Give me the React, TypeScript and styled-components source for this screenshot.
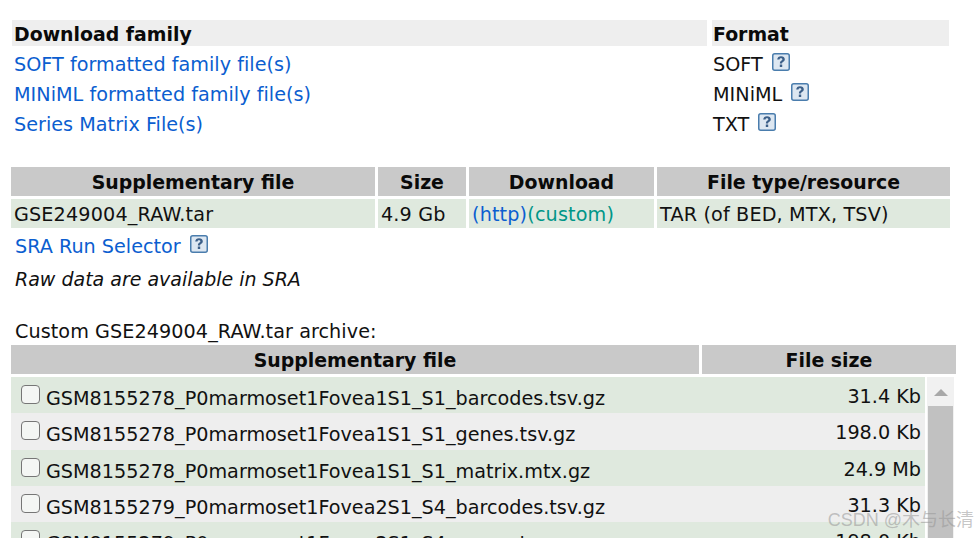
import * as React from 'react'
import styled, { createGlobalStyle } from 'styled-components'

const GlobalStyle = createGlobalStyle`
  html, body {
    margin: 0;
    padding: 0;
    height: 538px;
    overflow: hidden;
    background: #fff;
  }
  body {
    font-family: 'DejaVu Sans', Verdana, sans-serif;
    font-size: 19.2px;
    color: #111;
  }
`

const Page = styled.div`
  width: 978px;
  height: 538px;
  padding: 20px 0 0 11px;
  box-sizing: border-box;
  position: relative;
  overflow: hidden;
`

const FamilyTable = styled.div`
  display: grid;
  grid-template-columns: 695px 237px;
  column-gap: 5px;
  margin-left: 1px;
  width: 937px;
`

const FamilyHead = styled.div<{ $narrow?: boolean }>`
  height: 26px;
  line-height: 28px;
  padding-left: ${(p) => (p.$narrow ? '1px' : '2px')};
  background: #eee;
  font-size: 18.9px;
  font-weight: 700;
  color: #0a0a0a;
`

const FamilyCell = styled.div<{ $narrow?: boolean }>`
  height: 30px;
  line-height: 38px;
  padding-left: ${(p) => (p.$narrow ? '1px' : '2px')};
  white-space: nowrap;
  letter-spacing: 0.02px;
`

const Link = styled.a<{ $teal?: boolean }>`
  color: ${(p) => (p.$teal ? '#009688' : '#0b5ed0')};
  text-decoration: none;
`

const HelpSvg = styled.svg`
  display: inline-block;
  width: 18px;
  height: 18px;
  margin-left: 9px;
  vertical-align: 0;
`

const ResourceTable = styled.div`
  display: grid;
  grid-template-columns: 364px 88px 185px 293px;
  column-gap: 3px;
  row-gap: 3px;
  margin-top: 31px;
  width: 939px;
`

const HeadCell = styled.div`
  height: 29px;
  line-height: 31px;
  background: #c9c9c9;
  font-size: 18.9px;
  font-weight: 700;
  text-align: center;
  color: #0a0a0a;
`

const DataCell = styled.div`
  height: 29px;
  line-height: 31px;
  padding-left: 3px;
  background: #dfe9de;
  white-space: nowrap;
  letter-spacing: 0.15px;
`

const SraRow = styled.div`
  height: 34px;
  line-height: 37px;
  padding-left: 4px;
`

const Note = styled.div`
  height: 33px;
  line-height: 35px;
  padding-left: 4px;
  font-size: 19px;
  font-style: italic;
`

const ArchiveTitle = styled.div`
  margin-top: 25px;
  height: 25px;
  line-height: 23px;
  padding-left: 4px;
  letter-spacing: 0.07px;
`

const ArchiveHead = styled.div`
  display: grid;
  grid-template-columns: 688px 254px;
  column-gap: 3px;
  width: 945px;
`

const FileArea = styled.div`
  display: flex;
  margin-top: 3px;
  height: 200px;
  overflow: hidden;
`

const FileList = styled.div`
  width: 914px;
  flex: none;
`

const FileRow = styled.div<{ $shaded: boolean }>`
  display: flex;
  height: 36.33px;
  background: ${(p) => (p.$shaded ? '#dfe9de' : '#eee')};
  white-space: nowrap;
`

const Check = styled.span`
  flex: none;
  box-sizing: border-box;
  width: 19px;
  height: 19px;
  margin: 8px 6px 0 10px;
  border: 1.5px solid #767676;
  border-radius: 4px;
  background: #f4f6f4;
`

const FileName = styled.span`
  flex: 1;
  line-height: 44px;
`

const FileSize = styled.span`
  padding-right: 4px;
  line-height: 40px;
`

const Scrollbar = styled.div`
  width: 27px;
  margin-left: 2px;
  background: #f1f1f1;
  display: flex;
  flex-direction: column;
  flex: none;
`

const ScrollUp = styled.div`
  height: 29px;
  display: flex;
  justify-content: center;
  padding-top: 12px;
  box-sizing: border-box;
  &::before {
    content: '';
    border-left: 7px solid transparent;
    border-right: 7px solid transparent;
    border-bottom: 7px solid #a8a8a8;
    height: 0;
  }
`

const ScrollThumb = styled.div`
  flex: 1;
  margin: 0 1px;
  background: #c1c1c1;
`

const Watermark = styled.div`
  position: absolute;
  right: 4px;
  top: 510px;
  font-family: 'Liberation Sans', 'Noto Sans CJK SC', sans-serif;
  font-size: 18px;
  line-height: 20px;
  color: rgba(150, 150, 150, 0.55);
  white-space: nowrap;
`

function HelpIcon() {
  return (
    <HelpSvg viewBox="0 0 18 18" aria-hidden="true">
      <rect x="0.75" y="0.75" width="16.5" height="16.5" rx="2" fill="#dde7f1" stroke="#4a7dad" strokeWidth="1.5" />
      <path
        d="M5.2 6.6C5.3 4.4 6.9 3.2 9 3.2c2.2 0 3.8 1.2 3.8 3 0 1.5-.9 2.1-1.8 2.7-.7.5-.9.8-.9 1.5H7.9c0-1.4.4-2 1.3-2.7.8-.5 1.2-.8 1.2-1.4 0-.7-.6-1.1-1.4-1.1-.9 0-1.4.5-1.5 1.4H5.2ZM7.8 11.4h2.4v2.5H7.8v-2.5Z"
        fill="#3c5f88"
      />
    </HelpSvg>
  )
}

const families = [
  ['SOFT formatted family file(s)', 'SOFT'],
  ['MINiML formatted family file(s)', 'MINiML'],
  ['Series Matrix File(s)', 'TXT'],
]

const files = [
  ['GSM8155278_P0marmoset1Fovea1S1_S1_barcodes.tsv.gz', '31.4 Kb'],
  ['GSM8155278_P0marmoset1Fovea1S1_S1_genes.tsv.gz', '198.0 Kb'],
  ['GSM8155278_P0marmoset1Fovea1S1_S1_matrix.mtx.gz', '24.9 Mb'],
  ['GSM8155279_P0marmoset1Fovea2S1_S4_barcodes.tsv.gz', '31.3 Kb'],
  ['GSM8155279_P0marmoset1Fovea2S1_S4_genes.tsv.gz', '198.0 Kb'],
]

export default function App() {
  return (
    <Page>
      <GlobalStyle />
      <FamilyTable>
        <FamilyHead>Download family</FamilyHead>
        <FamilyHead $narrow>Format</FamilyHead>
        {families.map(([label, format]) => (
          <React.Fragment key={format}>
            <FamilyCell>
              <Link>{label}</Link>
            </FamilyCell>
            <FamilyCell $narrow>
              {format}
              <HelpIcon />
            </FamilyCell>
          </React.Fragment>
        ))}
      </FamilyTable>

      <ResourceTable>
        <HeadCell>Supplementary file</HeadCell>
        <HeadCell>Size</HeadCell>
        <HeadCell>Download</HeadCell>
        <HeadCell>File type/resource</HeadCell>
        <DataCell>GSE249004_RAW.tar</DataCell>
        <DataCell>4.9 Gb</DataCell>
        <DataCell>
          <Link>(http)</Link>
          <Link $teal>(custom)</Link>
        </DataCell>
        <DataCell>TAR (of BED, MTX, TSV)</DataCell>
      </ResourceTable>

      <SraRow>
        <Link>SRA Run Selector</Link>
        <HelpIcon />
      </SraRow>
      <Note>Raw data are available in SRA</Note>

      <ArchiveTitle>Custom GSE249004_RAW.tar archive:</ArchiveTitle>
      <ArchiveHead>
        <HeadCell>Supplementary file</HeadCell>
        <HeadCell>File size</HeadCell>
      </ArchiveHead>
      <FileArea>
        <FileList>
          {files.map(([name, size], i) => (
            <FileRow key={name} $shaded={i % 2 === 0}>
              <Check />
              <FileName>{name}</FileName>
              <FileSize>{size}</FileSize>
            </FileRow>
          ))}
        </FileList>
        <Scrollbar>
          <ScrollUp />
          <ScrollThumb />
        </Scrollbar>
      </FileArea>
      <Watermark>CSDN @木与长清</Watermark>
    </Page>
  )
}
